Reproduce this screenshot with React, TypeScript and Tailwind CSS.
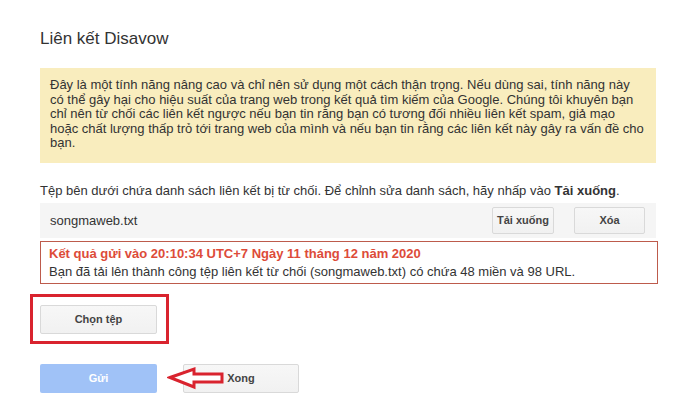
export default function App() {
  const btn =
    "flex items-center justify-center rounded-[2px] border border-[#d9d9d9] bg-gradient-to-b from-[#f7f7f7] to-[#f1f1f1] text-[11px] font-bold text-[#444]";

  return (
    <div className="h-[417px] w-[695px] bg-white font-['Liberation_Sans',Arial,sans-serif] text-[13px] text-[#222]">
      <div className="relative ml-[40px] w-[616px] pt-[29px]">
        <h1 className="text-[17px] leading-[20px] text-[#333]">Liên kết Disavow</h1>

        {/* Cảnh báo */}
        <div className="mt-[19px] bg-[#f9edbe] px-[10px] pt-[10px] pb-[12px] leading-[14.6px] text-[#333]">
          Đây là một tính năng nâng cao và chỉ nên sử dụng một cách thận trọng. Nếu dùng sai, tính năng này
          <br />
          có thể gây hại cho hiệu suất của trang web trong kết quả tìm kiếm của Google. Chúng tôi khuyên bạn
          <br />
          chỉ nên từ chối các liên kết ngược nếu bạn tin rằng bạn có tương đối nhiều liên kết spam, giả mạo
          <br />
          hoặc chất lượng thấp trỏ tới trang web của mình và nếu bạn tin rằng các liên kết này gây ra vấn đề cho
          <br />
          bạn.
        </div>

        <p className="mt-[20px] leading-[15px] text-[#333]">
          Tệp bên dưới chứa danh sách liên kết bị từ chối. Để chỉnh sửa danh sách, hãy nhấp vào{" "}
          <span className="font-bold">Tải xuống</span>.
        </p>

        {/* Tệp hiện tại */}
        <div className="mt-[5px] flex h-[35px] items-center bg-[#f5f5f5] pr-[11px] pl-[10px]">
          <span className="flex-1 text-[#333]">songmaweb.txt</span>
          <button type="button" className={`${btn} h-[27px] w-[62px]`}>
            Tải xuống
          </button>
          <button type="button" className={`${btn} ml-[20px] h-[27px] w-[71px]`}>
            Xóa
          </button>
        </div>

        {/* Kết quả gửi */}
        <div className="mt-[3px] w-[618px] border border-[#bd5b4c] px-[8px] pt-[3px] pb-[2px] leading-[18px]">
          <p className="font-bold text-[#dd4b39]">Kết quả gửi vào 20:10:34 UTC+7 Ngày 11 tháng 12 năm 2020</p>
          <p className="text-[#333]">
            Bạn đã tải lên thành công tệp liên kết từ chối (songmaweb.txt) có chứa 48 miền và 98 URL.
          </p>
        </div>

        {/* Chọn tệp, được khoanh đỏ */}
        <div className="mt-[10px] -ml-[10px] inline-flex border-[3px] border-[#d9232e] pt-[8px] pr-[9px] pb-[7px] pl-[7px]">
          <button type="button" className={`${btn} h-[29px] w-[117px]`}>
            Chọn tệp
          </button>
        </div>

        <div className="mt-[20px] flex gap-[26px]">
          <button
            type="button"
            className="flex h-[29px] w-[117px] items-center justify-center rounded-[2px] bg-[#a0c2f7] text-[11px] font-bold text-white"
          >
            Gửi
          </button>
          <button type="button" className={`${btn} h-[29px] w-[116px]`}>
            Xong
          </button>
        </div>

        {/* Mũi tên chú thích */}
        <svg
          className="absolute top-[364px] left-[127px]"
          width="58"
          height="28"
          viewBox="0 0 58 28"
          aria-hidden
        >
          <polygon
            points="3,13.5 27,5 27,10 55,10 55,18 27,18 27,23"
            fill="#fff"
            stroke="#d9232e"
            strokeWidth="3"
            strokeLinejoin="miter"
          />
        </svg>
      </div>
    </div>
  );
}
